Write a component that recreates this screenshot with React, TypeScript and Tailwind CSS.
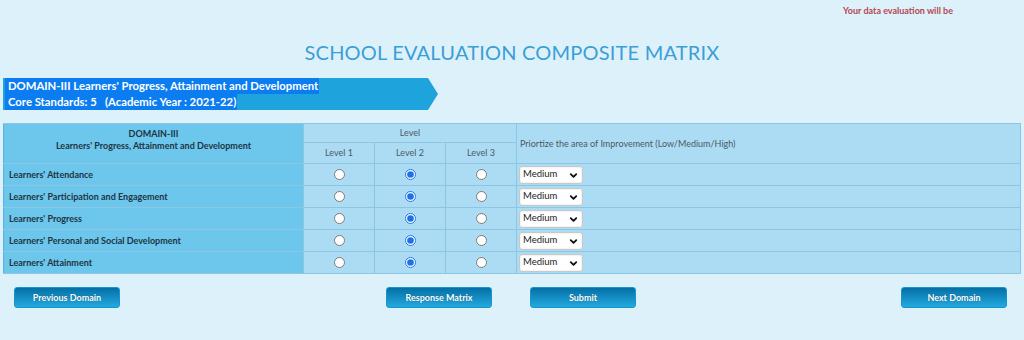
import { ChevronDown } from "lucide-react";

const rows = [
  "Learners' Attendance",
  "Learners' Participation and Engagement",
  "Learners' Progress",
  "Learners' Personal and Social Development",
  "Learners' Attainment",
];

function PrioritySelect() {
  return (
    <div className="relative h-[18px] w-[64px] rounded-[3px] border border-[#c8c8c8] bg-white shadow-[inset_0_0_2px_rgba(0,0,0,0.15)]">
      <select
        defaultValue="Medium"
        className="h-full w-full appearance-none bg-transparent pl-[3px] text-[9.5px] text-[#222] outline-none"
      >
        <option>Low</option>
        <option>Medium</option>
        <option>High</option>
      </select>
      <ChevronDown className="pointer-events-none absolute right-[3px] top-[3px] h-[11px] w-[11px] text-[#111]" strokeWidth={4} />
    </div>
  );
}

function Btn({ label }: { label: string }) {
  return (
    <button className="h-[21px] w-[106px] rounded-[3px] border border-[#1b93cf] bg-gradient-to-b from-[#0470a5] to-[#22aae0] text-[9px] font-bold text-white [text-shadow:0_0_1px_rgba(0,0,0,0.4)]">
      {label}
    </button>
  );
}

export default function App() {
  return (
    <div className="h-[340px] w-[1024px] overflow-hidden bg-[#ddf1fb] font-['Lato','Open_Sans',sans-serif]">
      {/* notice */}
      <div className="flex h-[22px] items-center">
        <div className="ml-[843px] whitespace-nowrap text-[9px] font-bold text-[#b5474f]">
          Your data evaluation will be
        </div>
      </div>

      <h1 className="mt-[17px] text-center text-[20px] leading-[26px] tracking-[0.2px] text-[#3a9fd6]">
        SCHOOL EVALUATION COMPOSITE MATRIX
      </h1>

      {/* banner */}
      <div className="ml-[3px] mt-[13px] flex h-[32px] w-[435px] flex-col justify-center bg-[#1fa3dc] pl-[2px] text-[11.3px] font-bold leading-[16px] text-white [clip-path:polygon(0_0,425px_0,100%_50%,425px_100%,0_100%)]">
        <span className="w-fit bg-[#0b7df0] pl-[3px] pr-[1px]">DOMAIN-III Learners' Progress, Attainment and Development</span>
        <span className="w-fit bg-[#0b7df0] pl-[3px] pr-[1px]">Core Standards: 5&nbsp;&nbsp;&nbsp;(Academic Year : 2021-22)</span>
      </div>

      {/* matrix */}
      <table className="ml-[3px] mt-[13px] w-[1018px] border-collapse text-[9px]">
        <colgroup>
          <col className="w-[300px]" />
          <col className="w-[71px]" />
          <col className="w-[71px]" />
          <col className="w-[71px]" />
          <col />
        </colgroup>
        <thead>
          <tr className="h-[19px]">
            <th
              rowSpan={2}
              className="border border-[#8dc6e2] border-l-[#55b3dd] bg-[#6dc6ec] pb-[8px] align-middle font-bold leading-[12px] text-[#1d3542]"
            >
              DOMAIN-III
              <br />
              Learners' Progress, Attainment and Development
            </th>
            <th colSpan={3} className="border border-[#8dc6e2] bg-[#abdcf4] font-normal text-[#4b5964]">
              Level
            </th>
            <th rowSpan={2} className="border border-[#8dc6e2] bg-[#abdcf4] pl-[3px] text-left font-normal text-[#4b5964]">
              Priortize the area of Improvement (Low/Medium/High)
            </th>
          </tr>
          <tr className="h-[21px]">
            {["Level 1", "Level 2", "Level 3"].map((l) => (
              <th key={l} className="border border-[#8dc6e2] bg-[#abdcf4] font-normal text-[#4b5964]">
                {l}
              </th>
            ))}
          </tr>
        </thead>
        <tbody>
          {rows.map((r, i) => (
            <tr key={r} className="h-[22px]">
              <td className="border border-[#8dc6e2] border-l-[#55b3dd] bg-[#6dc6ec] pl-[5px] font-bold text-[#1d3542]">{r}</td>
              {[1, 2, 3].map((lv) => (
                <td key={lv} className="border border-[#8dc6e2] bg-[#abdcf4] text-center align-middle">
                  <input
                    type="radio"
                    name={`row-${i}`}
                    defaultChecked={lv === 2}
                    className="m-0 h-[11px] w-[11px] translate-y-[2px] accent-[#1a73e8]"
                  />
                </td>
              ))}
              <td className="border border-[#8dc6e2] bg-[#abdcf4] pl-[2px]">
                <PrioritySelect />
              </td>
            </tr>
          ))}
        </tbody>
      </table>

      {/* actions */}
      <div className="mt-[9px] flex">
        <div className="ml-[14px]">
          <Btn label="Previous Domain" />
        </div>
        <div className="ml-[266px]">
          <Btn label="Response Matrix" />
        </div>
        <div className="ml-[38px]">
          <Btn label="Submit" />
        </div>
        <div className="ml-[265px]">
          <Btn label="Next Domain" />
        </div>
      </div>
    </div>
  );
}
